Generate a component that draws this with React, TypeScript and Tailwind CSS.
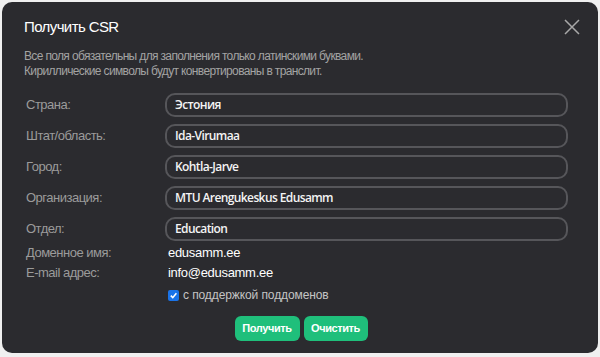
import React from "react";

const rows = [
  ["Страна:", "Эстония"],
  ["Штат/область:", "Ida-Virumaa"],
  ["Город:", "Kohtla-Jarve"],
  ["Организация:", "MTU Arengukeskus Edusamm"],
  ["Отдел:", "Education"],
];

export default function App() {
  return (
    <div className="w-[600px] h-[357px] bg-[#f0f0f0] p-[2px] pb-[4px]" style={{ fontFamily: '"Liberation Sans", Arial, sans-serif' }}>
      <div className="h-full rounded-[10px] bg-[#2b2b2f] flex flex-col pl-[22px] pr-[30px] pt-[14px]">
        <div className="flex items-center justify-between h-[22px]">
          <div className="text-[15px] text-white tracking-[-0.6px]">Получить CSR</div>
          <svg width="16" height="16" viewBox="0 0 16 16" className="mr-[-12px]">
            <path d="M1 1 L15 15 M15 1 L1 15" stroke="#a8a8a8" strokeWidth="1.5" />
          </svg>
        </div>
        <div className="mt-[11px] text-[12px] leading-[15px] text-[#a3a3a3] tracking-[-0.65px]">
          <div>Все поля обязательны для заполнения только латинскими буквами.</div>
          <div>Кириллические символы будут конвертированы в транслит.</div>
        </div>
        <div className="mt-[14px] flex flex-col gap-[7px]">
          {rows.map(([l, v]) => (
            <div key={l} className="flex items-center">
              <div className="w-[141px] pl-[2px] text-[13px] text-[#9b9b9b] tracking-[-0.5px]">{l}</div>
              <div className="flex-1 h-[24px] rounded-[10px] border-2 border-[#56565a] flex items-center pl-[8px] text-[12px] text-[#f4f4f4] font-semibold tracking-[-0.6px]" style={{ fontFamily: '"Open Sans", sans-serif' }}>
                {v}
              </div>
            </div>
          ))}
        </div>
        <div className="mt-[2px] flex items-center h-[20px]">
          <div className="w-[144px] pl-[2px] text-[13px] text-[#9b9b9b] tracking-[-0.5px]">Доменное имя:</div>
          <div className="text-[13px] text-white tracking-[-0.3px]">edusamm.ee</div>
        </div>
        <div className="flex items-center h-[20px]">
          <div className="w-[144px] pl-[2px] text-[13px] text-[#9b9b9b] tracking-[-0.5px]">E-mail адрес:</div>
          <div className="text-[13px] text-white tracking-[-0.3px]">info@edusamm.ee</div>
        </div>
        <div className="mt-[1px] flex items-center h-[22px] pl-[144px]">
          <div className="w-[11px] h-[11px] rounded-[2px] bg-[#1a73e8] flex items-center justify-center">
            <svg width="9" height="9" viewBox="0 0 10 10">
              <path d="M2 5.2 L4.2 7.4 L8.2 2.6" stroke="white" strokeWidth="1.8" fill="none" />
            </svg>
          </div>
          <div className="ml-[4px] text-[12px] text-[#c4c4c4] tracking-[-0.1px]">с поддержкой поддоменов</div>
        </div>
        <div className="mt-[10px] flex justify-center gap-[4px] pl-[10px]">
          <button className="h-[25px] w-[65px] rounded-[6px] bg-[#1fbf7b] text-white text-[11px] font-bold tracking-[-0.4px]">Получить</button>
          <button className="h-[25px] w-[64px] rounded-[6px] bg-[#1fbf7b] text-white text-[11px] font-bold tracking-[-0.4px]">Очистить</button>
        </div>
      </div>
    </div>
  );
}
